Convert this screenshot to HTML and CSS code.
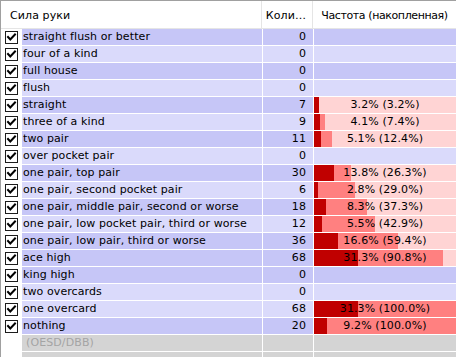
FILE: index.html
```html
<!DOCTYPE html>
<html>
<head>
<meta charset="utf-8">
<link rel="stylesheet" href="styles.css">
</head>
<body>
<div class="view">
  <div class="head">
    <div class="hc hc-name">Сила руки</div>
    <div class="hc hc-count">Коли…</div>
    <div class="hc hc-freq">Частота (накопленная)</div>
  </div>
  <div class="rows">
    <div class="row d"><div class="chk"><span class="cb"><svg viewBox="0 0 11 11" width="11" height="11"><polyline points="2,5 4.3,7.5 9,2.5"/></svg></span></div><div class="name">straight flush or better</div><div class="cnt">0</div><div class="freq"></div></div>
    <div class="row l"><div class="chk"><span class="cb"><svg viewBox="0 0 11 11" width="11" height="11"><polyline points="2,5 4.3,7.5 9,2.5"/></svg></span></div><div class="name">four of a kind</div><div class="cnt">0</div><div class="freq"></div></div>
    <div class="row d"><div class="chk"><span class="cb"><svg viewBox="0 0 11 11" width="11" height="11"><polyline points="2,5 4.3,7.5 9,2.5"/></svg></span></div><div class="name">full house</div><div class="cnt">0</div><div class="freq"></div></div>
    <div class="row l"><div class="chk"><span class="cb"><svg viewBox="0 0 11 11" width="11" height="11"><polyline points="2,5 4.3,7.5 9,2.5"/></svg></span></div><div class="name">flush</div><div class="cnt">0</div><div class="freq"></div></div>
    <div class="row d"><div class="chk"><span class="cb"><svg viewBox="0 0 11 11" width="11" height="11"><polyline points="2,5 4.3,7.5 9,2.5"/></svg></span></div><div class="name">straight</div><div class="cnt">7</div><div class="freq bar" style="--a:3.2%;--b:3.2%">3.2% (3.2%)</div></div>
    <div class="row l"><div class="chk"><span class="cb"><svg viewBox="0 0 11 11" width="11" height="11"><polyline points="2,5 4.3,7.5 9,2.5"/></svg></span></div><div class="name">three of a kind</div><div class="cnt">9</div><div class="freq bar" style="--a:4.1%;--b:7.4%">4.1% (7.4%)</div></div>
    <div class="row d"><div class="chk"><span class="cb"><svg viewBox="0 0 11 11" width="11" height="11"><polyline points="2,5 4.3,7.5 9,2.5"/></svg></span></div><div class="name">two pair</div><div class="cnt">11</div><div class="freq bar" style="--a:5.1%;--b:12.4%">5.1% (12.4%)</div></div>
    <div class="row l"><div class="chk"><span class="cb"><svg viewBox="0 0 11 11" width="11" height="11"><polyline points="2,5 4.3,7.5 9,2.5"/></svg></span></div><div class="name">over pocket pair</div><div class="cnt">0</div><div class="freq"></div></div>
    <div class="row d"><div class="chk"><span class="cb"><svg viewBox="0 0 11 11" width="11" height="11"><polyline points="2,5 4.3,7.5 9,2.5"/></svg></span></div><div class="name">one pair, top pair</div><div class="cnt">30</div><div class="freq bar" style="--a:13.8%;--b:26.3%">13.8% (26.3%)</div></div>
    <div class="row l"><div class="chk"><span class="cb"><svg viewBox="0 0 11 11" width="11" height="11"><polyline points="2,5 4.3,7.5 9,2.5"/></svg></span></div><div class="name">one pair, second pocket pair</div><div class="cnt">6</div><div class="freq bar" style="--a:2.8%;--b:29.0%">2.8% (29.0%)</div></div>
    <div class="row d"><div class="chk"><span class="cb"><svg viewBox="0 0 11 11" width="11" height="11"><polyline points="2,5 4.3,7.5 9,2.5"/></svg></span></div><div class="name">one pair, middle pair, second or worse</div><div class="cnt">18</div><div class="freq bar" style="--a:8.3%;--b:37.3%">8.3% (37.3%)</div></div>
    <div class="row l"><div class="chk"><span class="cb"><svg viewBox="0 0 11 11" width="11" height="11"><polyline points="2,5 4.3,7.5 9,2.5"/></svg></span></div><div class="name">one pair, low pocket pair, third or worse</div><div class="cnt">12</div><div class="freq bar" style="--a:5.5%;--b:42.9%">5.5% (42.9%)</div></div>
    <div class="row d"><div class="chk"><span class="cb"><svg viewBox="0 0 11 11" width="11" height="11"><polyline points="2,5 4.3,7.5 9,2.5"/></svg></span></div><div class="name">one pair, low pair, third or worse</div><div class="cnt">36</div><div class="freq bar" style="--a:16.6%;--b:59.4%">16.6% (59.4%)</div></div>
    <div class="row d"><div class="chk"><span class="cb"><svg viewBox="0 0 11 11" width="11" height="11"><polyline points="2,5 4.3,7.5 9,2.5"/></svg></span></div><div class="name">ace high</div><div class="cnt">68</div><div class="freq bar" style="--a:31.3%;--b:90.8%">31.3% (90.8%)</div></div>
    <div class="row d"><div class="chk"><span class="cb"><svg viewBox="0 0 11 11" width="11" height="11"><polyline points="2,5 4.3,7.5 9,2.5"/></svg></span></div><div class="name">king high</div><div class="cnt">0</div><div class="freq"></div></div>
    <div class="row l"><div class="chk"><span class="cb"><svg viewBox="0 0 11 11" width="11" height="11"><polyline points="2,5 4.3,7.5 9,2.5"/></svg></span></div><div class="name">two overcards</div><div class="cnt">0</div><div class="freq"></div></div>
    <div class="row l"><div class="chk"><span class="cb"><svg viewBox="0 0 11 11" width="11" height="11"><polyline points="2,5 4.3,7.5 9,2.5"/></svg></span></div><div class="name">one overcard</div><div class="cnt">68</div><div class="freq bar" style="--a:31.3%;--b:100%">31.3% (100.0%)</div></div>
    <div class="row d"><div class="chk"><span class="cb"><svg viewBox="0 0 11 11" width="11" height="11"><polyline points="2,5 4.3,7.5 9,2.5"/></svg></span></div><div class="name">nothing</div><div class="cnt">20</div><div class="freq bar" style="--a:9.2%;--b:100%">9.2% (100.0%)</div></div>
    <div class="row g"><div class="chk"></div><div class="name">(OESD/DBB)</div><div class="cnt"></div><div class="freq"></div></div>
    <div class="row g"><div class="chk"></div><div class="name"></div><div class="cnt"></div><div class="freq"></div></div>
  </div>
</div>
</body>
</html>
```

FILE: styles.css
```css
html, body {
  margin: 0;
  padding: 0;
  background: #ffffff;
}
body {
  width: 456px;
  height: 357px;
  overflow: hidden;
  font-family: "DejaVu Sans", "Liberation Sans", sans-serif;
  font-size: 11px;
  letter-spacing: 0.1px;
  color: #000;
}
.view {
  border-top: 1px solid #a0a0a0;
  border-left: 1px solid #a0a0a0;
  height: 356px;
  overflow: hidden;
}
.head {
  display: grid;
  grid-template-columns: 261px 51px 1fr;
  height: 27px;
  border-bottom: 1px solid #e5e5e5;
  background: #fff;
}
.hc {
  display: flex;
  align-items: center;
  padding-top: 2px;
  border-right: 1px solid #e5e5e5;
}
.hc-name { padding-left: 9px; }
.hc-count { justify-content: flex-end; padding-right: 6px; }
.hc-freq { justify-content: center; border-right: none; letter-spacing: -0.4px; }
.rows {
  display: flex;
  flex-direction: column;
  gap: 1px;
}
.row {
  display: grid;
  grid-template-columns: 20px 240px 50px 1fr;
  column-gap: 1px;
  height: 16px;
  line-height: 16px;
}
.chk {
  display: flex;
  align-items: center;
  padding-left: 4px;
  background: #fff;
}
.name {
  padding-left: 1px;
  white-space: nowrap;
  overflow: hidden;
}
.row.d .name, .row.d .cnt, .row.d .freq { background: #c6c6f7; }
.row.l .name, .row.l .cnt, .row.l .freq { background: #dadafb; }
.row.g .name, .row.g .cnt, .row.g .freq { background: #d4d4d4; color: #a4a4a4; }
.row.g .name { padding-left: 4px; }
.cb {
  display: block;
  width: 11px;
  height: 11px;
  border: 1px solid #1c1c1c;
  background: #fff;
}
.cb svg {
  display: block;
  fill: none;
  stroke: #000;
  stroke-width: 2;
  stroke-linecap: square;
}
.cnt {
  text-align: right;
  padding-right: 7px;
}
.freq {
  text-align: center;
  white-space: nowrap;
}
.row .freq.bar {
  background: linear-gradient(to right, #c00000 0 var(--a), #ff8080 var(--a) var(--b), #ffd4d4 var(--b) 100%);
}
```
